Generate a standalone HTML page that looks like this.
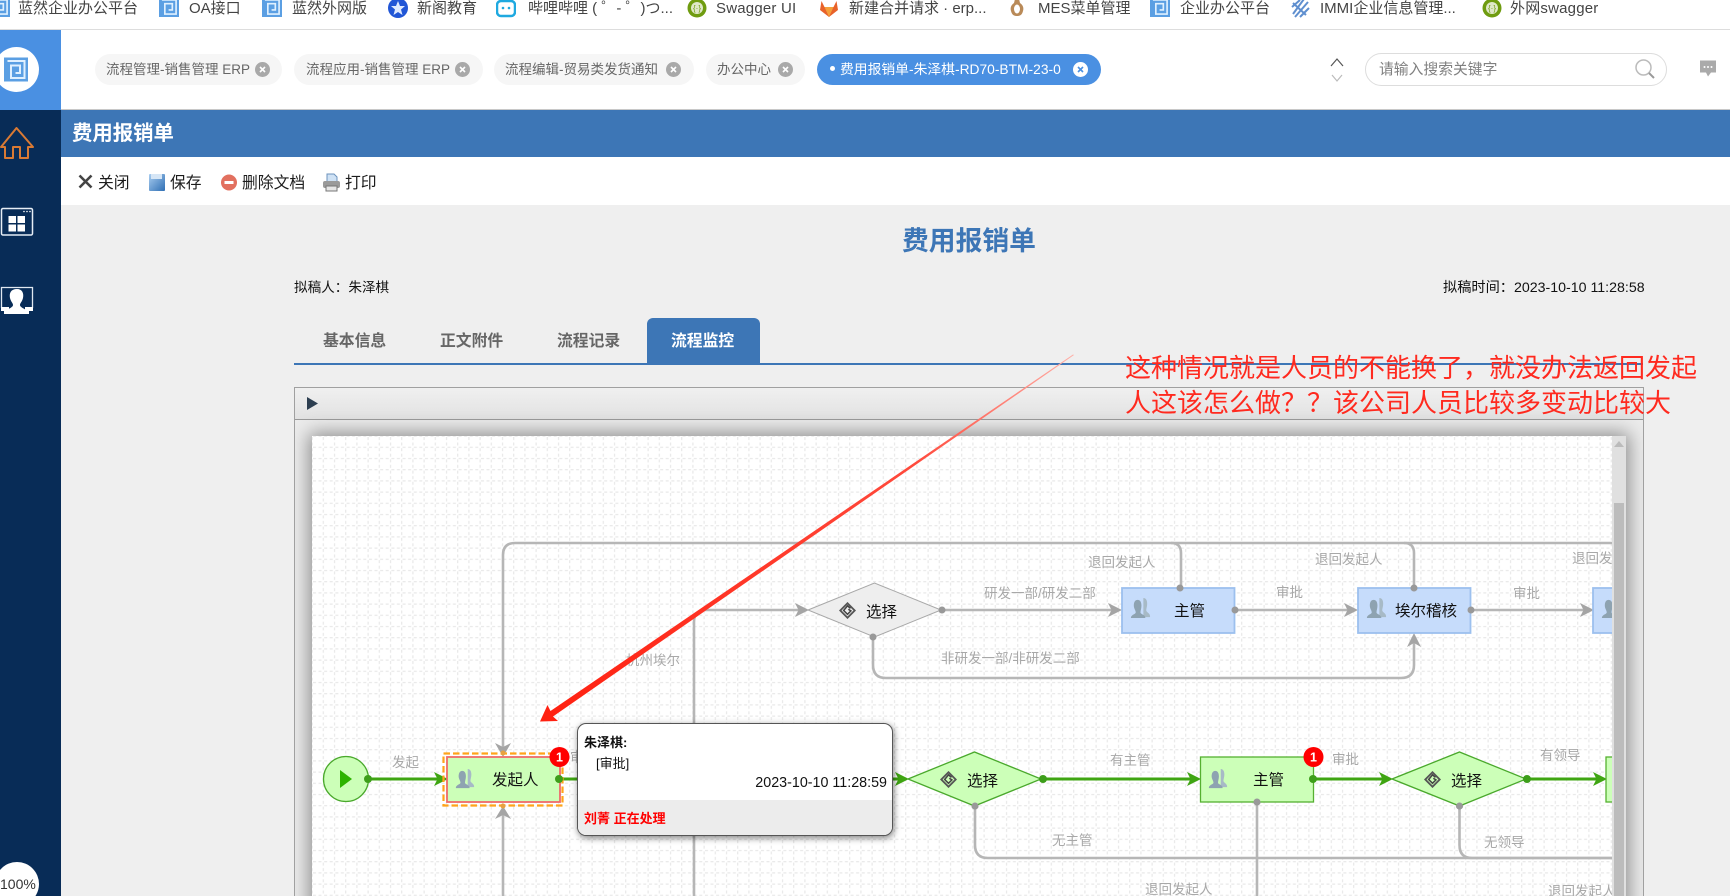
<!DOCTYPE html>
<html lang="zh"><head><meta charset="utf-8"><title>费用报销单</title>
<style>
html,body{margin:0;padding:0;overflow:hidden;width:1730px;height:896px}
body{position:relative;background:#efefef;font-family:"Liberation Sans","Noto Sans CJK SC",sans-serif;color:#222}
.a{position:absolute}
.t{position:absolute;white-space:nowrap}
.bm{font-size:15px;line-height:20px;top:-1px;color:#444}
.bi{position:absolute;top:-3px;width:20px;height:20px}
.pill{position:absolute;top:54px;height:31px;border-radius:15.5px;background:#f6f6f6}
.pt{position:absolute;top:55px;line-height:30px;font-size:13.5px;color:#666;white-space:nowrap}
.x{position:absolute;top:62px;width:15px;height:15px}
.tool{font-size:15.8px;line-height:20px;top:174px;color:#1c1c1c}
.tab{font-size:15.8px;font-weight:700;line-height:22px;top:331px;color:#666}
svg text{font-family:"Liberation Sans","Noto Sans CJK SC",sans-serif}
.l{font-size:13.5px;fill:#a8a8a8}
.n{font-size:15.5px;fill:#111}
</style></head><body>
<svg width="0" height="0" style="position:absolute"><defs>
<symbol id="lg" viewBox="0 0 24 24"><rect width="24" height="24" fill="#5b9fe3"/><path d="M3.5 3.5H20.5V20.5H7V8H16V15.5H11.5" fill="none" stroke="#dff0ff" stroke-width="2"/></symbol>
<symbol id="sw" viewBox="0 0 20 20"><circle cx="10" cy="10" r="9.5" fill="#6f9c10"/><circle cx="10" cy="10" r="6" fill="#dfe8c8"/><text x="10" y="13" font-size="8" text-anchor="middle" fill="#6f9c10">{·}</text></symbol>
<symbol id="xg" viewBox="0 0 15 15"><circle cx="7.5" cy="7.5" r="7.5" fill="#a9a9a9"/><path d="M5 5L10 10M10 5L5 10" stroke="#fff" stroke-width="1.6"/></symbol>
<symbol id="pp" viewBox="0 0 22 24"><path d="M14 1c3 0 4 3 4 6 0 3-1 5-1 7 0 2 4 3 4 6v1H14z" fill="#a7bac6"/><path d="M8 3c3 0 4 3 4 6s-1 5-1 7c0 2 4 2 5 5v1H1v-1c1-3 5-3 5-5 0-2-2-4-2-7s1-6 4-6z" fill="#8ea3b1"/></symbol>
<symbol id="gw" viewBox="0 0 20 20"><path d="M10 1.5L18.500 10L10 18.500L1.500 10Z" fill="none" stroke="#555" stroke-width="2.200"/><path d="M13.500 7.500L10 4.500L5.500 10L10 14.500L14 10.500L11 8.500" fill="none" stroke="#444" stroke-width="1.800"/></symbol>
<symbol id="ar" viewBox="0 0 14 14"><path d="M14 7L0 0L3.5 7L0 14Z"/></symbol>
</defs></svg>

<!-- bookmarks bar -->
<div class="a" style="left:0;top:0;width:1730px;height:29px;background:#fff;border-bottom:1px solid #ddd;overflow:hidden">
<svg class="bi" style="left:-10px"><use href="#lg"/></svg><div class="t bm" style="left:18px">蓝然企业办公平台</div>
<svg class="bi" style="left:159px"><use href="#lg"/></svg><div class="t bm" style="left:189px">OA接口</div>
<svg class="bi" style="left:262px"><use href="#lg"/></svg><div class="t bm" style="left:292px">蓝然外网版</div>
<svg class="bi" style="left:388px;top:-2px" viewBox="0 0 20 20"><circle cx="10" cy="10" r="10" fill="#2156d6"/><path d="M10 3l2 5h5l-4 3.5 1.5 5.5-4.5-3-4.500 3 1.500-5.500-4-3.500h5z" fill="#dfeaff"/></svg><div class="t bm" style="left:417px">新阁教育</div>
<svg class="bi" style="left:496px;top:-2px" viewBox="0 0 20 20"><rect x="1" y="3" width="18" height="15" rx="4" fill="none" stroke="#1fa9e0" stroke-width="2.500"/><path d="M5 0l3 3M15 0l-3 3" stroke="#1fa9e0" stroke-width="2"/><circle cx="7" cy="10" r="1.300" fill="#1fa9e0"/><circle cx="13" cy="10" r="1.300" fill="#1fa9e0"/></svg><div class="t bm" style="left:528px">哔哩哔哩 ( ゜- ゜)つ...</div>
<svg class="bi" style="left:687px;top:-2px"><use href="#sw"/></svg><div class="t bm" style="left:716px;letter-spacing:.2px">Swagger UI</div>
<svg class="bi" style="left:819px;top:-2px" viewBox="0 0 20 20"><path d="M10 19L1 12l1.500-9 3 6h9l3-6 1.500 9z" fill="#e8622a"/><path d="M10 19L5.500 9h9z" fill="#f4a03a"/></svg><div class="t bm" style="left:849px">新建合并请求 · erp...</div>
<svg class="bi" style="left:1007px;top:-2px" viewBox="0 0 20 20"><path d="M8 1h4l1 4c3 2 4 5 3 8-1 4-3 5-6 5s-5-1-6-5c-1-3 0-6 3-8z" fill="#b98a58"/><ellipse cx="10" cy="11" rx="3" ry="4.500" fill="#fff"/></svg><div class="t bm" style="left:1038px">MES菜单管理</div>
<svg class="bi" style="left:1150px"><use href="#lg"/></svg><div class="t bm" style="left:1180px">企业办公平台</div>
<svg class="bi" style="left:1290px;top:-2px" viewBox="0 0 20 20"><g fill="none" stroke="#5f8fcf" stroke-width="2"><path d="M3 16L14 1"/><path d="M5 19L18 4"/><path d="M2 9L10 2"/><path d="M10 19L19 10"/><path d="M3 5L16 17"/></g></svg><div class="t bm" style="left:1320px">IMMI企业信息管理...</div>
<svg class="bi" style="left:1482px;top:-2px"><use href="#sw"/></svg><div class="t bm" style="left:1510px;letter-spacing:.2px">外网swagger</div>
</div>

<!-- header -->
<div class="a" style="left:0;top:30px;width:1730px;height:79px;background:#fff;border-bottom:1px solid #c8c8c8"></div>
<div class="pill" style="left:95px;width:187px"></div><div class="pt" style="left:106px">流程管理-销售管理 ERP</div><svg class="x" style="left:255px"><use href="#xg"/></svg>
<div class="pill" style="left:294px;width:189px"></div><div class="pt" style="left:306px">流程应用-销售管理 ERP</div><svg class="x" style="left:455px"><use href="#xg"/></svg>
<div class="pill" style="left:494px;width:200px"></div><div class="pt" style="left:505px">流程编辑-贸易类发货通知</div><svg class="x" style="left:666px"><use href="#xg"/></svg>
<div class="pill" style="left:706px;width:99px"></div><div class="pt" style="left:717px">办公中心</div><svg class="x" style="left:778px"><use href="#xg"/></svg>
<div class="pill" style="left:817px;width:284px;background:#4a90e2"></div>
<div class="a" style="left:830px;top:66px;width:5px;height:5px;border-radius:50%;background:#fff"></div>
<div class="pt" style="left:840px;color:#fff;font-size:13.800px">费用报销单-朱泽棋-RD70-BTM-23-0</div>
<svg class="x" style="left:1073px" viewBox="0 0 15 15"><circle cx="7.500" cy="7.500" r="7.500" fill="#fff"/><path d="M5 5L10 10M10 5L5 10" stroke="#4a90e2" stroke-width="1.600"/></svg>
<svg class="a" style="left:1330px;top:56px" width="14" height="28" viewBox="0 0 14 28"><path d="M1 10L7 3L13 10" fill="none" stroke="#555" stroke-width="1.200"/><path d="M2 19L7 25L12 19" fill="none" stroke="#bbb" stroke-width="1.200"/></svg>
<div class="a" style="left:1365px;top:53px;width:300px;height:31px;border:1px solid #ddd;border-radius:17px;background:#fff"></div>
<div class="t" style="left:1379px;top:60px;line-height:21px;font-size:14.800px;color:#808080">请输入搜索关键字</div>
<svg class="a" style="left:1634px;top:58px" width="22" height="22" viewBox="0 0 22 22"><circle cx="9.500" cy="9.500" r="7.500" fill="none" stroke="#bbb" stroke-width="1.500"/><path d="M15 15L20 20" stroke="#999" stroke-width="2"/></svg>
<svg class="a" style="left:1699px;top:60px" width="18" height="18" viewBox="0 0 18 17"><path d="M1 0H17V12H12L9 16L7 12H1Z" fill="#aaa"/><circle cx="5.500" cy="6.500" r="1" fill="#fff"/><circle cx="9" cy="6.500" r="1" fill="#fff"/><circle cx="12.500" cy="6.500" r="1" fill="#fff"/></svg>

<!-- sidebar -->
<div class="a" style="left:0;top:30px;width:61px;height:80px;background:#4a90e2"></div>
<div class="a" style="left:0;top:110px;width:61px;height:786px;background:#082c57"></div>
<div class="a" style="left:-6px;top:47px;width:45px;height:45px;border-radius:50%;background:#fff"></div>
<svg class="a" style="left:4px;top:57px" width="24" height="25"><use href="#lg"/></svg>
<svg class="a" style="left:0;top:126px" width="34" height="34" viewBox="0 0 34 34"><path d="M1 21L16.500 2L33 21H28V32H20V21H13V32H5V21Z" fill="none" stroke="#d97a34" stroke-width="2" stroke-linejoin="round"/></svg>
<svg class="a" style="left:0;top:207px" width="34" height="30" viewBox="0 0 34 30"><rect x="1.500" y="1.500" width="31" height="26.500" rx="1.500" fill="none" stroke="#e6edf5" stroke-width="1.500"/><g fill="#fff"><rect x="8.500" y="9" width="7.500" height="7"/><rect x="17.500" y="9" width="7.500" height="7"/><rect x="8.500" y="17.500" width="7.500" height="7"/><rect x="17.500" y="17.500" width="7.500" height="7"/><circle cx="24" cy="4.500" r=".8"/><circle cx="27" cy="4.500" r=".8"/><circle cx="30" cy="4.500" r=".8"/></g></svg>
<svg class="a" style="left:0;top:286px" width="34" height="32" viewBox="0 0 34 32"><path d="M1.500 22V1.500H32.500V22" fill="none" stroke="#dfe7f0" stroke-width="1.300"/><path d="M17 3c5 0 7 4 6 9-1 4-3 5-3 7 0 2 3 3 6 5l3 1v3H4v-3l3-1c3-2 6-3 6-5 0-2-2-3-3-7-1-5 1-9 7-9z" fill="#fff"/><rect x="1" y="21" width="8" height="4" fill="#fff"/><rect x="25" y="21" width="8" height="4" fill="#fff"/></svg>
<div class="a" style="left:-5px;top:862px;width:44px;height:44px;border-radius:50%;background:#fff"></div>
<div class="t" style="left:0;top:874px;font-size:14px;line-height:20px;color:#333">100%</div>

<!-- title bar + toolbar -->
<div class="a" style="left:61px;top:110px;width:1669px;height:47px;background:#3d76b6"></div>
<div class="t" style="left:72px;top:121px;font-size:20.400px;font-weight:700;line-height:26px;color:#fff">费用报销单</div>
<div class="a" style="left:61px;top:157px;width:1669px;height:48px;background:#fff"></div>
<svg class="a" style="left:78px;top:174px" width="15" height="15" viewBox="0 0 15 15"><path d="M1.500 1.500L13.500 13.500M13.500 1.500L1.500 13.500" stroke="#444" stroke-width="2.600"/></svg>
<div class="t tool" style="left:98px">关闭</div>
<svg class="a" style="left:149px;top:174px" width="16" height="17" viewBox="0 0 16 17"><defs><linearGradient id="sv" x1="0" y1="0" x2="1" y2="1"><stop offset="0" stop-color="#a9cdf0"/><stop offset="1" stop-color="#2f6fb4"/></linearGradient></defs><rect width="16" height="17" rx="1" fill="url(#sv)"/><rect x="2" y="0" width="11" height="5" fill="#d6e6f6"/></svg>
<div class="t tool" style="left:170px">保存</div>
<svg class="a" style="left:221px;top:174px" width="16" height="17" viewBox="0 0 16 17"><circle cx="8" cy="8.500" r="8" fill="#e2705f"/><rect x="3.500" y="7" width="9" height="3" fill="#fff"/></svg>
<div class="t tool" style="left:242px">删除文档</div>
<svg class="a" style="left:322px;top:173px" width="19" height="19" viewBox="0 0 19 19"><path d="M5 1H12L15 4V9H5Z" fill="#cfe2f5" stroke="#6d93bd"/><rect x="1" y="8" width="17" height="7" rx="2" fill="#9a9a9a"/><rect x="4" y="13" width="11" height="5" fill="#e6e6e6" stroke="#777"/></svg>
<div class="t tool" style="left:345px">打印</div>

<!-- page -->
<div class="t" style="left:902px;top:223px;font-size:26.800px;font-weight:700;line-height:36px;color:#3d76b6">费用报销单</div>
<div class="t" style="left:294px;top:278px;font-size:13.600px;line-height:20px;color:#111">拟稿人：朱泽棋</div>
<div class="t" style="left:1443px;top:278px;font-size:14.200px;line-height:20px;color:#111">拟稿时间：2023-10-10 11:28:58</div>
<div class="t tab" style="left:323px">基本信息</div>
<div class="t tab" style="left:440px">正文附件</div>
<div class="t tab" style="left:557px">流程记录</div>
<div class="a" style="left:647px;top:318px;width:113px;height:46px;background:#3d76b6;border-radius:6px 6px 0 0"></div>
<div class="t tab" style="left:671px;color:#fff">流程监控</div>
<div class="a" style="left:294px;top:363px;width:1349px;height:2px;background:#3d76b6"></div>

<!-- panel -->
<div class="a" style="left:294px;top:387px;width:1348px;height:509px;border:1px solid #a0a0a0;border-bottom:0;background:#ececec;overflow:hidden">
 <div class="a" style="left:0;top:0;width:1348px;height:31px;background:linear-gradient(#f0f0f0,#e2e2e2);border-bottom:1px solid #999"></div>
 <svg class="a" style="left:11px;top:9px" width="13" height="13"><path d="M1 0L12 6.500L1 13Z" fill="#2c3e50"/></svg>
 <div class="a" style="left:17px;top:48px;width:1314px;height:480px;background:#fff;box-shadow:0 0 18px 3px #8c8c8c"></div>
 <div class="a" style="left:1317px;top:48px;width:14px;height:470px;background:#e0e0e0"></div>
 <div class="a" style="left:1319px;top:115px;width:10px;height:400px;background:#bcbcbc"></div>
 <svg class="a" style="left:1319px;top:53px" width="10" height="7"><path d="M5 0L10 6H0Z" fill="#bbb"/></svg>
</div>

<!-- diagram -->
<svg class="a" style="left:312px;top:436px" width="1300" height="460" viewBox="312 436 1300 460">
<defs>
<pattern id="grid" x="322.700" y="446.700" width="11.200" height="11.200" patternUnits="userSpaceOnUse">
<g fill="#e8e8e8"><rect x="0" y="1.500" width="1.200" height="3"/><rect x="0" y="7" width="1.200" height="3"/><rect x="1.500" y="0" width="3" height="1.200"/><rect x="7" y="0" width="3" height="1.200"/></g>
</pattern>
</defs>
<rect x="312" y="436" width="1300" height="460" fill="url(#grid)"/>
<g fill="none" stroke="#b6b6b6" stroke-width="2.600">
<path d="M503 748V555Q503 543 515 543H1612"/>
<path d="M503 896V812"/>
<path d="M1181 588V553Q1181 543 1171 543"/>
<path d="M1414 588V553Q1414 543 1404 543"/>
<path d="M694 896V622Q694 610 706 610H800"/>
<path d="M942 610H1112"/><path d="M1235 610H1350"/><path d="M1471 610H1586"/>
<path d="M873 637V665Q873 678 886 678H1401Q1414 678 1414 665V640"/>
<path d="M975 806V845Q975 858 988 858H1612"/>
<path d="M1459.500 806V845Q1459.500 858 1472 858H1612"/>
<path d="M1257 802V896"/>
</g>
<g fill="#a5a5a5">
<use href="#ar" x="795" y="603" width="14" height="14"/><use href="#ar" x="1108" y="603" width="14" height="14"/><use href="#ar" x="1344" y="603" width="14" height="14"/><use href="#ar" x="1580" y="603" width="14" height="14"/>
<path d="M503 757L495 743L503 747L511 743Z"/><path d="M503 806L495 819L503 815L511 819Z"/><path d="M1414 633L1407 647L1414 643L1421 647Z"/>
</g>
<!-- gray row -->
<path d="M808 610L874.500 583L941 610L874.500 637Z" fill="#eee" stroke="#a8a8a8"/>
<use href="#gw" x="839" y="602" width="17" height="17"/><text class="n" x="866" y="617">选择</text>
<g fill="#c6dcfb" stroke="#9cc0ee" stroke-width="1.800"><rect x="1122" y="588" width="112.500" height="45"/><rect x="1358" y="588" width="112.500" height="45"/><rect x="1593" y="588" width="60" height="45"/></g>
<use href="#pp" x="1130" y="597" width="21" height="23"/><text class="n" x="1174" y="616">主管</text>
<use href="#pp" x="1366" y="597" width="21" height="23"/><text class="n" x="1395" y="616">埃尔稽核</text>
<use href="#pp" x="1601" y="597" width="21" height="23"/>
<g fill="#999"><circle cx="942" cy="610" r="3.500"/><circle cx="873" cy="637" r="3.500"/><circle cx="1235" cy="610" r="3.500"/><circle cx="1471" cy="610" r="3.500"/><circle cx="1180" cy="588" r="3.500"/><circle cx="1414" cy="588" r="3.500"/><circle cx="975" cy="806" r="3.500"/><circle cx="1459.500" cy="806" r="3.500"/><circle cx="1257" cy="802" r="3.500"/></g>
<g class="lbl">
<text class="l" x="984" y="598">研发一部/研发二部</text>
<text class="l" x="941" y="663">非研发一部/非研发二部</text>
<text class="l" x="626" y="665">杭州埃尔</text>
<text class="l" x="1088" y="567">退回发起人</text>
<text class="l" x="1276" y="597">审批</text>
<text class="l" x="1315" y="564">退回发起人</text>
<text class="l" x="1513" y="598">审批</text>
<text class="l" x="1572" y="563">退回发起人</text>
<text class="l" x="392" y="767">发起</text>
<text class="l" x="570" y="762">审批</text>
<text class="l" x="1110" y="765">有主管</text>
<text class="l" x="1052" y="845">无主管</text>
<text class="l" x="1332" y="764">审批</text>
<text class="l" x="1484" y="847">无领导</text>
<text class="l" x="1540" y="760">有领导</text>
<text class="l" x="1145" y="894">退回发起人</text>
<text class="l" x="1548" y="896">退回发起人</text>
</g>
<!-- green row -->
<g fill="none" stroke="#3fa512" stroke-width="3"><path d="M368 779H440"/><path d="M559 779H900"/><path d="M1043 779H1194"/><path d="M1313 779H1386"/><path d="M1527 779H1600"/></g>
<g fill="#3fa512"><use href="#ar" x="434" y="772" width="14" height="14"/><use href="#ar" x="895" y="772" width="14" height="14"/><use href="#ar" x="1187" y="772" width="14" height="14"/><use href="#ar" x="1379" y="772" width="14" height="14"/><use href="#ar" x="1593" y="772" width="14" height="14"/></g>
<circle cx="346" cy="779" r="22.500" fill="#ccffb8" stroke="#4aa92c" stroke-width="1.300"/>
<path d="M340 770L352 779L340 788Z" fill="#2db300"/>
<rect x="443.500" y="753.500" width="119" height="52" fill="none" stroke="#ffa31a" stroke-width="2.200" stroke-dasharray="6.500 3"/>
<rect x="447" y="757" width="113" height="45" fill="#ccffb8" stroke="#ef6a6a" stroke-width="1.800"/>
<use href="#pp" x="455" y="768" width="20" height="22"/><text class="n" x="492" y="785">发起人</text>
<path d="M908 779L974.500 752L1041 779L974.500 806Z" fill="#ccffb8" stroke="#4aa92c" stroke-width="1.300"/>
<use href="#gw" x="940" y="771" width="17" height="17"/><text class="n" x="967" y="786">选择</text>
<rect x="1200.500" y="757" width="113" height="45" fill="#ccffb8" stroke="#55b030" stroke-width="1.300"/>
<use href="#pp" x="1208" y="768" width="20" height="22"/><text class="n" x="1253" y="785">主管</text>
<path d="M1392 779L1459.500 752L1526 779L1459.500 806Z" fill="#ccffb8" stroke="#4aa92c" stroke-width="1.300"/>
<use href="#gw" x="1424" y="771" width="17" height="17"/><text class="n" x="1451" y="786">选择</text>
<rect x="1606" y="757" width="60" height="45" fill="#ccffb8" stroke="#55b030" stroke-width="1.300"/>
<g fill="#3d9e1a"><circle cx="368" cy="779" r="4"/><circle cx="559" cy="779" r="4"/><circle cx="1043" cy="779" r="4"/><circle cx="1313" cy="779" r="4"/><circle cx="1527" cy="779" r="4"/></g>
<g fill="#999"><circle cx="975" cy="806" r="3.500"/><circle cx="1459.500" cy="806" r="3.500"/><circle cx="1257" cy="802" r="3.500"/><circle cx="503" cy="753" r="2.500" fill="#e8a040"/><circle cx="503" cy="806" r="2.500" fill="#e8a040"/></g>
<circle cx="559.500" cy="757" r="10" fill="#f00"/><text x="559.500" y="761.500" font-size="12.500" font-weight="700" fill="#fff" text-anchor="middle">1</text>
<circle cx="1313.500" cy="757" r="10" fill="#f00"/><text x="1313.500" y="761.500" font-size="12.500" font-weight="700" fill="#fff" text-anchor="middle">1</text>
</svg>

<!-- popup -->
<div class="a" style="left:577px;top:723px;width:314px;height:111px;border:1px solid #555;border-radius:9px;background:#fff;box-shadow:1px 2px 7px rgba(0,0,0,.5);overflow:hidden">
 <div class="a" style="left:0;top:76px;width:314px;height:35px;background:#ececec"></div>
 <div class="t" style="left:6px;top:10px;font-size:13px;font-weight:700;line-height:18px;color:#111">朱泽棋:</div>
 <div class="t" style="left:18px;top:31px;font-size:13px;line-height:18px;color:#111">[审批]</div>
 <div class="t" style="right:5px;top:50px;font-size:14.300px;line-height:18px;color:#111">2023-10-10 11:28:59</div>
 <div class="t" style="left:6px;top:86px;font-size:13px;font-weight:700;line-height:18px;color:#f00">刘菁 正在处理</div>
</div>

<!-- annotation -->
<svg class="a" style="left:0;top:0" width="1730" height="896" viewBox="0 0 1730 896">
<defs><linearGradient id="rg" gradientUnits="userSpaceOnUse" x1="1075" y1="352" x2="540" y2="721"><stop offset="0" stop-color="#ffb0a8"/><stop offset=".3" stop-color="#ff4a3c"/><stop offset="1" stop-color="#ff2010"/></linearGradient></defs>
<path d="M1073 354.500L1074 355L553 716.500L558 721L540 721.500L547.500 705L550.500 711Z" fill="url(#rg)"/>
</svg>
<div class="t" style="left:1125px;top:351px;font-size:26px;line-height:35px;color:#ff2a1f">这种情况就是人员的不能换了，就没办法返回发起<br>人这该怎么做？？该公司人员比较多变动比较大</div>
</body></html>
